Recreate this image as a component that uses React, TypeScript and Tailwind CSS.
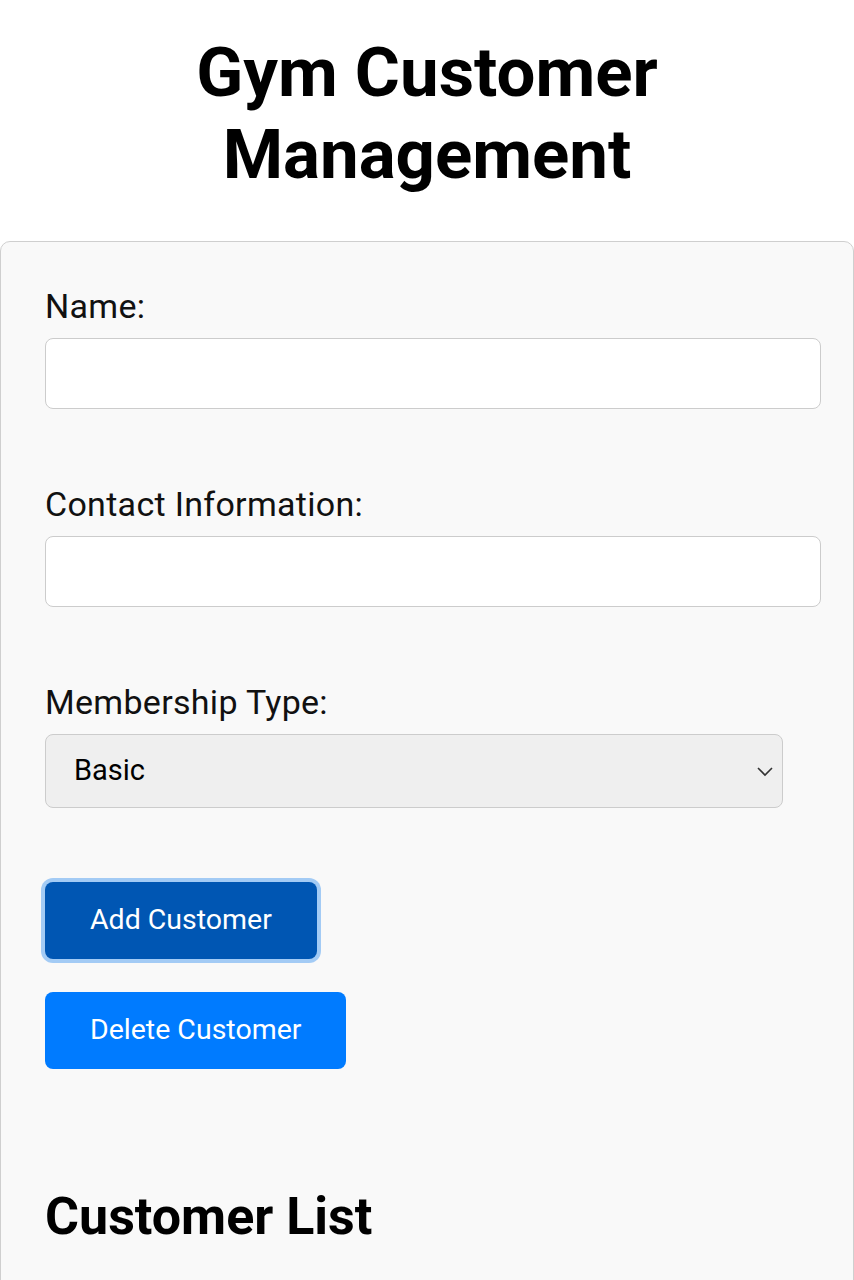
import React, { useState } from 'react';

const Field: React.FC<{ label: string; children: React.ReactNode }> = ({ label, children }) => (
  <div className="flex flex-col">
    <label className="text-[34px] leading-[40px] tracking-[0.3px] text-[#111]">{label}</label>
    <div className="mt-[12px]">{children}</div>
  </div>
);

const App: React.FC = () => {
  const [name, setName] = useState('');
  const [contact, setContact] = useState('');
  const [membership, setMembership] = useState('Basic');

  return (
    <div className="min-h-screen bg-white font-['Roboto',sans-serif] text-black">
      <h1 className="pt-[32px] text-center text-[69px] font-bold leading-[82px]">
        Gym Customer
        <br />
        Management
      </h1>

      <div className="mt-[45px] rounded-[10px] border border-[#cfcfcf] bg-[#f9f9f9] pl-[44px] pr-[32px] pt-[44px] pb-[60px]">
        <div className="flex flex-col gap-[75px]">
          <Field label="Name:">
            <input
              value={name}
              onChange={(e) => setName(e.target.value)}
              className="h-[71px] w-full rounded-[8px] border border-[#cccccc] bg-white px-4 text-[28px] outline-none"
            />
          </Field>
          <Field label="Contact Information:">
            <input
              value={contact}
              onChange={(e) => setContact(e.target.value)}
              className="h-[71px] w-full rounded-[8px] border border-[#cccccc] bg-white px-4 text-[28px] outline-none"
            />
          </Field>
          <Field label="Membership Type:">
            <div className="relative w-[738px]">
              <select
                value={membership}
                onChange={(e) => setMembership(e.target.value)}
                className="h-[74px] w-full appearance-none rounded-[8px] border border-[#cccccc] bg-[#efefef] pl-[28px] text-[29px] text-black outline-none"
              >
                <option>Basic</option>
                <option>Premium</option>
                <option>VIP</option>
              </select>
              <svg
                className="pointer-events-none absolute right-[9px] top-1/2 -translate-y-1/2"
                width="18"
                height="12"
                viewBox="0 0 18 12"
                fill="none"
              >
                <path d="M2 3l7 7 7-7" stroke="#333" strokeWidth="1.6" />
              </svg>
            </div>
          </Field>
        </div>

        <div className="mt-[74px] flex flex-col items-start gap-[33px]">
          <button className="h-[77px] rounded-[8px] bg-[#0056b3] px-[45px] text-[28.5px] text-white ring-4 ring-[#a3cbf5]">
            Add Customer
          </button>
          <button className="h-[77px] rounded-[8px] bg-[#007bff] px-[45px] text-[28.5px] text-white">
            Delete Customer
          </button>
        </div>

        <h2 className="mt-[117px] text-[52px] font-bold leading-[61px]">Customer List</h2>
      </div>
    </div>
  );
};

export default App;
